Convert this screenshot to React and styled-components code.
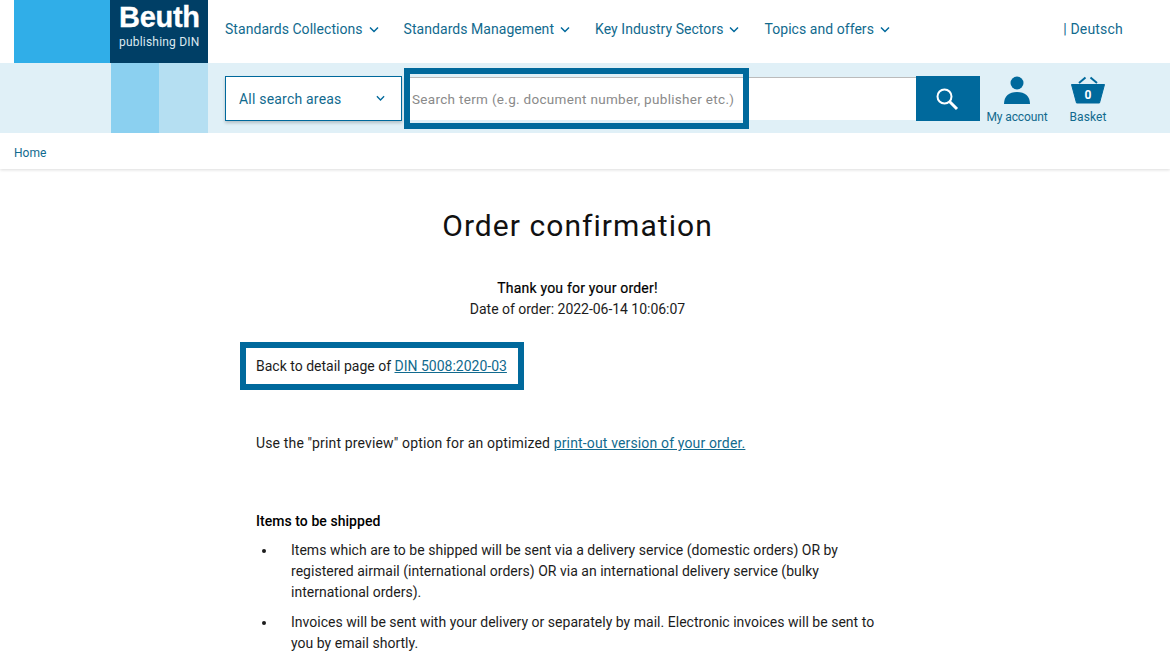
import React from 'react';
import styled, { createGlobalStyle } from 'styled-components';

const blue = '#00699c';
const navText = '#116a8e';

const GlobalStyle = createGlobalStyle`
  html, body {
    margin: 0;
    background: #fff;
    overflow: hidden;
  }
  body {
    font-family: Roboto, "Liberation Sans", sans-serif;
    color: #1c1c1c;
  }
`;

// header
const TopBar = styled.div`
  height: 63px;
  display: flex;
`;

const LogoLight = styled.div`
  width: 96px;
  margin-left: 14px;
  background: #30aee8;
`;

const LogoDark = styled.div`
  width: 98px;
  background: #003f66;
  color: #fff;
  box-sizing: border-box;
  padding: 2px 0 0 9px;
`;

const LogoName = styled.div`
  font-family: "Liberation Sans", sans-serif;
  font-weight: 700;
  font-size: 29px;
  line-height: 30px;
  letter-spacing: -0.3px;
  -webkit-text-stroke: 0.3px #fff;
`;

const LogoSub = styled.div`
  font-size: 12px;
  line-height: 16px;
  margin-top: 2px;
  letter-spacing: 0.2px;
  color: #dce9f0;
`;

const Nav = styled.nav`
  display: flex;
  align-items: center;
  gap: 25px;
  margin-left: 17px;
  height: 58px;
`;

const NavItem = styled.a`
  display: flex;
  align-items: center;
  gap: 6px;
  font-size: 14px;
  letter-spacing: 0.05px;
  color: ${navText};
`;

const Language = styled.a`
  margin-left: auto;
  margin-right: 47px;
  align-self: center;
  margin-bottom: 5px;
  font-size: 14px;
  letter-spacing: 0.2px;
  color: ${navText};
`;

const SearchBand = styled.div`
  height: 70px;
  display: flex;
  background: #e0f0f7;
  position: relative;
`;

const BandBlock = styled.div`
  width: ${props => props.width}px;
  margin-left: ${props => props.offset || 0}px;
  background: ${props => props.color};
`;

const AreaSelect = styled.div`
  width: 177px;
  height: 45px;
  margin: 13px 0 0 17px;
  box-sizing: border-box;
  border: 1px solid ${blue};
  background: #fff;
  box-shadow: 0 2px 3px rgba(0, 0, 0, 0.2);
  display: flex;
  align-items: center;
  justify-content: space-between;
  padding: 0 16px 0 13px;
  font-size: 14px;
  letter-spacing: 0.2px;
  color: ${navText};
`;

const SearchInput = styled.div`
  width: 511px;
  height: 43px;
  margin: 14px 0 0 3px;
  background: #fff;
  border-top: 1px solid #bbb;
  box-sizing: border-box;
  display: flex;
  align-items: center;
  padding-left: 7px;
  font-size: 13.5px;
  letter-spacing: 0.31px;
  color: #8a8a8a;
`;

const SearchButton = styled.button`
  width: 64px;
  height: 45px;
  margin-top: 13px;
  border: 0;
  padding: 0 2px 0 0;
  background: ${blue};
  display: flex;
  align-items: center;
  justify-content: center;
`;

const IconLink = styled.a`
  display: flex;
  flex-direction: column;
  align-items: center;
  width: ${props => props.width}px;
  margin-left: ${props => props.gap}px;
  padding-top: 13px;
  font-size: 12px;
  letter-spacing: ${props => props.tracking || 0}px;
  color: ${navText};
`;

const IconSlot = styled.div`
  height: 34px;
  display: flex;
  align-items: flex-start;
  justify-content: center;
`;

const Highlight = styled.div`
  position: absolute;
  left: 404px;
  top: 5px;
  width: 345px;
  height: 61px;
  box-sizing: border-box;
  border: 6px solid ${blue};
`;

const Breadcrumb = styled.div`
  height: 36px;
  box-sizing: border-box;
  padding: 12px 0 0 14px;
  font-size: 12px;
  line-height: 16px;
  color: ${navText};
  box-shadow: 0 1px 3px rgba(0, 0, 0, 0.14);
`;

// content
const Main = styled.main`
  width: 628px;
  margin-left: 256px;
`;

const Title = styled.h1`
  margin: 39px 0 0;
  width: 643px;
  text-align: center;
  font-size: 30px;
  line-height: 36px;
  font-weight: 400;
  letter-spacing: 1.05px;
  color: #111;
`;

const Thanks = styled.div`
  margin-top: 34px;
  width: 643px;
  text-align: center;
  font-size: 14px;
  line-height: 21px;
  letter-spacing: -0.03px;
`;

const ThanksStrong = styled.div`
  color: #000;
  letter-spacing: 0.2px;
  -webkit-text-stroke: 0.2px #000;
`;

const BackBox = styled.div`
  margin: 22px 0 0 -16px;
  width: 284px;
  height: 48px;
  box-sizing: border-box;
  border: 6px solid ${blue};
  padding-left: 10px;
  display: flex;
  align-items: center;
  white-space: pre;
  font-size: 14px;
`;

const TextLink = styled.a`
  color: ${navText};
  text-decoration: underline;
`;

const Paragraph = styled.p`
  margin: 43px 0 0;
  font-size: 14px;
  line-height: 21px;
  letter-spacing: 0.15px;
`;

const SectionTitle = styled.div`
  margin-top: 57px;
  font-size: 14px;
  line-height: 21px;
  font-weight: 500;
  letter-spacing: 0.05px;
  color: #000;
`;

const BulletList = styled.ul`
  list-style: none;
  margin: 8px 0 0;
  padding: 0 0 0 35px;
  font-size: 14px;
  line-height: 21px;
  letter-spacing: 0.02px;
`;

const BulletItem = styled.li`
  position: relative;
  margin-bottom: 9px;

  &::before {
    content: '';
    position: absolute;
    left: -29px;
    top: 9px;
    width: 4px;
    height: 4px;
    border-radius: 50%;
    background: #1c1c1c;
  }
`;

const Chevron = ({ size = 10, color = blue }) => (
  <svg width={size} height={size * 0.7} viewBox="0 0 10 7" fill="none">
    <path d="M1 1.5 5 5.5 9 1.5" stroke={color} strokeWidth="1.5" />
  </svg>
);

const SearchIcon = () => (
  <svg width="24" height="24" viewBox="0 0 24 24" fill="none" stroke="#fff" strokeWidth="2">
    <circle cx="9.5" cy="9.5" r="7" />
    <path d="M14.5 14.5 22 22" strokeWidth="3" />
  </svg>
);

const UserIcon = () => (
  <svg width="28" height="29" viewBox="0 0 28 29" fill={blue}>
    <circle cx="14" cy="7" r="6.5" />
    <path d="M1 28c0-8 5-12 13-12s13 4 13 12z" />
  </svg>
);

const BasketIcon = () => (
  <svg width="36" height="28" viewBox="0 0 36 28">
    <path d="M1.5 8.5H34.5L29.5 27H6.5z" fill={blue} stroke={blue} strokeLinejoin="round" />
    <path d="M9 7 15.5 1.5M27 7 20.5 1.5" stroke={blue} strokeWidth="2" fill="none" />
    <text x="18" y="22.5" textAnchor="middle" fontSize="12" fontWeight="700" fill="#fff" fontFamily="Roboto, sans-serif">0</text>
  </svg>
);

const navItems = ['Standards Collections', 'Standards Management', 'Key Industry Sectors', 'Topics and offers'];

const App = () => (
  <>
    <GlobalStyle />
    <TopBar>
      <LogoLight />
      <LogoDark>
        <LogoName>Beuth</LogoName>
        <LogoSub>publishing DIN</LogoSub>
      </LogoDark>
      <Nav>
        {navItems.map(item => (
          <NavItem key={item}>
            {item}
            <Chevron />
          </NavItem>
        ))}
      </Nav>
      <Language>| Deutsch</Language>
    </TopBar>
    <SearchBand>
      <BandBlock width={48} offset={111} color="#8bd0f0" />
      <BandBlock width={49} color="#b5dff2" />
      <AreaSelect>
        All search areas
        <Chevron size={9} />
      </AreaSelect>
      <SearchInput>Search term (e.g. document number, publisher etc.)</SearchInput>
      <SearchButton aria-label="Search">
        <SearchIcon />
      </SearchButton>
      <IconLink width={64} gap={5} tracking={-0.1}>
        <IconSlot><UserIcon /></IconSlot>
        My account
      </IconLink>
      <IconLink width={50} gap={14} tracking={0.1}>
        <IconSlot><BasketIcon /></IconSlot>
        Basket
      </IconLink>
      <Highlight />
    </SearchBand>
    <Breadcrumb>Home</Breadcrumb>
    <Main>
      <Title>Order confirmation</Title>
      <Thanks>
        <ThanksStrong>Thank you for your order!</ThanksStrong>
        Date of order: 2022-06-14 10:06:07
      </Thanks>
      <BackBox>
        Back to detail page of <TextLink>DIN 5008:2020-03</TextLink>
      </BackBox>
      <Paragraph>
        Use the "print preview" option for an optimized <TextLink>print-out version of your order.</TextLink>
      </Paragraph>
      <SectionTitle>Items to be shipped</SectionTitle>
      <BulletList>
        <BulletItem>
          Items which are to be shipped will be sent via a delivery service (domestic orders) OR by registered airmail (international orders) OR via an international delivery service (bulky international orders).
        </BulletItem>
        <BulletItem>
          Invoices will be sent with your delivery or separately by mail. Electronic invoices will be sent to you by email shortly.
        </BulletItem>
      </BulletList>
    </Main>
  </>
);

export default App;
